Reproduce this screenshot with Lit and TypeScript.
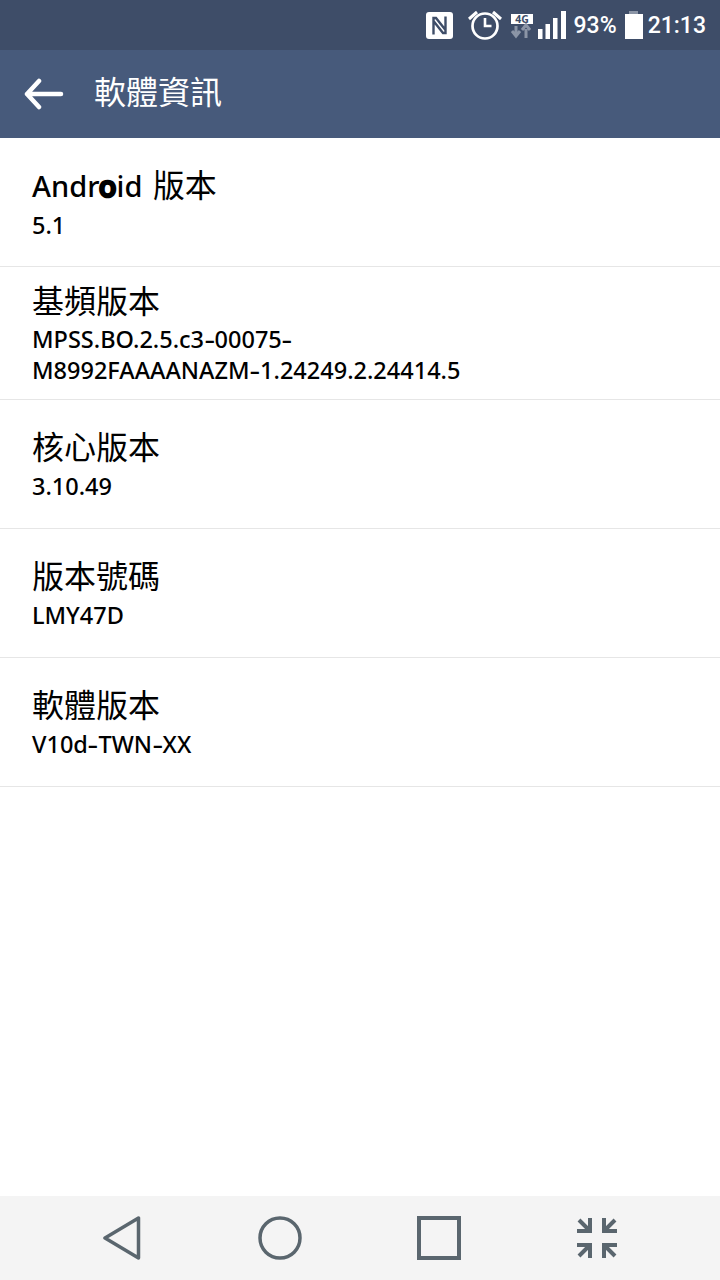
import { LitElement, html, css } from "lit";
import { customElement } from "lit/decorators.js";

const rows: [unknown, string[]][] = [
  [html`<span class="lat">And<span class="o">r</span><span class="o2">o</span>id</span> 版本`, ["5.1"]],
  ["基頻版本", ["MPSS.BO.2.5.c3-00075-", "M8992FAAAANAZM-1.24249.2.24414.5"]],
  ["核心版本", ["3.10.49"]],
  ["版本號碼", ["LMY47D"]],
  ["軟體版本", ["V10d-TWN-XX"]],
];

const sub = (l: string) => {
  const parts = l.split("-");
  return parts.map((p, i) => html`${p}${i < parts.length - 1 ? html`<span class="h">-</span>` : ""}`);
};

@customElement("app-root")
export class AppRoot extends LitElement {
  static styles = css`
    :host { display: flex; flex-direction: column; width: 720px; height: 1280px; background: #fff;
      font-family: "Noto Sans", "Noto Sans CJK TC", sans-serif; overflow: hidden; }
    .status { height: 50px; background: #3e4d68; display: flex; align-items: center; justify-content: flex-end;
      padding-right: 14px; color: #fff; font-size: 23px; font-weight: 500; box-sizing: border-box; font-family: Roboto, sans-serif; }
    .status svg { display: block; flex: none; }
    .nfc { margin-right: 13px; margin-top: 1px; }
    .alarm { margin-right: 7px; }
    .net { margin-right: 5px; margin-top: 2px; overflow: visible; }
    .sig { margin-right: 8px; }
    .pct { margin-right: 8px; }
    .batt { margin-right: 5px; }
    .bar { height: 88px; background: #475a7b; display: flex; align-items: center; color: #fff; }
    .back { margin-left: 24px; margin-right: 31px; flex: none; }
    .title { font-size: 32px; font-weight: 400; line-height: 84px; padding-bottom: 4px; color: #fff; margin-left: -1px; }
    .list { flex: 1; }
    .row { border-bottom: 1px solid #e6e6e6; padding: 24px 32px 0; box-sizing: border-box; height: 129px; color: #000; }
    .row.two { height: 133px; padding-top: 11px; }
    .t { font-size: 32px; line-height: 46px; font-weight: 400; white-space: nowrap; }
    .s { font-size: 23.500px; line-height: 31px; font-weight: 500; white-space: nowrap; }
    .row:not(.two) .s { line-height: 32px; }
    .lat { font-size: 29px; font-weight: 500; margin-right: 2px; }
    .o2 { -webkit-text-stroke: 2.500px #000; }
    .h { display: inline-block; transform: scaleX(1.4); margin: 0 1.500px; }
    .nav { height: 84px; background: #f4f4f4; display: flex; align-items: center; }
    .nav svg { display: block; flex: none; }
    .nb { margin-left: 103px; } .nc { margin-left: 117px; } .nd { margin-left: 115px; } .ne { margin-left: 116px; }
  `;

  render() {
    return html`
      <div class="status">
        <svg class="nfc" width="27" height="27" viewBox="0 0 27 27">
          <rect width="27" height="27" rx="3" fill="#fff"/>
          <path d="M7.500 22.500V6h2.500l9.500 12M19.500 4.500V21h-2.500L7.500 9" fill="none" stroke="#3e4d68" stroke-width="2.400"/>
        </svg>
        <svg class="alarm" width="38" height="34" viewBox="0 0 38 34" fill="none" stroke="#fff">
          <circle cx="19" cy="18" r="12.500" stroke-width="2.700"/>
          <path d="M19 10v8h6.500" stroke-width="2.600"/>
          <path d="M3 11 11 4M35 11 27 4" stroke-width="3"/>
        </svg>
        <svg class="net" width="22" height="25" viewBox="0 0 22 25">
          <rect width="22" height="10" fill="#fff"/>
          <text x="11" y="8.800" text-anchor="middle" font-family="Noto Sans" font-size="10.500" font-weight="700" fill="#3e4d68">4G</text>
          <path d="M5 12v8M1 17l4 5 4-5" stroke="#8b95a6" stroke-width="3" fill="none"/>
          <path d="M15 24v-9M11 16l4-5 4 5" stroke="#8b95a6" stroke-width="3" fill="none"/>
        </svg>
        <svg class="sig" width="28" height="28" viewBox="0 0 28 28" fill="#fff">
          <rect x="0" y="18" width="4.500" height="10"/><rect x="7.500" y="13" width="4.500" height="15"/>
          <rect x="15" y="7" width="4.500" height="21"/><rect x="23" y="0" width="5" height="28"/>
        </svg>
        <span class="pct">93%</span>
        <svg class="batt" width="18" height="28" viewBox="0 0 18 28">
          <rect x="4" y="0" width="9" height="3" fill="#8b95a6"/>
          <rect x="0" y="3" width="18" height="25" fill="#fff"/>
        </svg>
        <span>21:13</span>
      </div>
      <div class="bar">
        <svg class="back" width="40" height="32" viewBox="0 0 40 32" fill="none" stroke="#fff" stroke-width="4.500" stroke-linecap="round" stroke-linejoin="round">
          <path d="M37 16H3M15 3 3 16l12 13"/>
        </svg>
        <span class="title">軟體資訊</span>
      </div>
      <div class="list">
        ${rows.map(([t, s]) => html`
          <div class="row ${s.length > 1 ? "two" : ""}">
            <div class="t">${t}</div>
            ${s.map((l) => html`<div class="s">${sub(l)}</div>`)}
          </div>`)}
      </div>
      <div class="nav">
        <svg class="nb" width="38" height="44" viewBox="0 0 38 44" fill="none" stroke="#5a666e" stroke-width="3.500" stroke-linejoin="round">
          <path d="M35.500 2v40L2 22z"/>
        </svg>
        <svg class="nc" width="44" height="44" viewBox="0 0 44 44" fill="none" stroke="#5a666e" stroke-width="3.500">
          <circle cx="22" cy="22" r="20"/>
        </svg>
        <svg class="nd" width="44" height="44" viewBox="0 0 44 44" fill="none" stroke="#5a666e" stroke-width="4">
          <rect x="2" y="2" width="40" height="40"/>
        </svg>
        <svg class="ne" width="40" height="40" viewBox="0 0 40 40" fill="none" stroke="#5a666e" stroke-width="4">
          <path d="M13 0V13H0M2 2 12 12M27 0V13H40M38 2 28 12M13 40V27H0M2 38 12 28M27 40V27H40M38 38 28 28"/>
        </svg>
      </div>
    `;
  }
}
